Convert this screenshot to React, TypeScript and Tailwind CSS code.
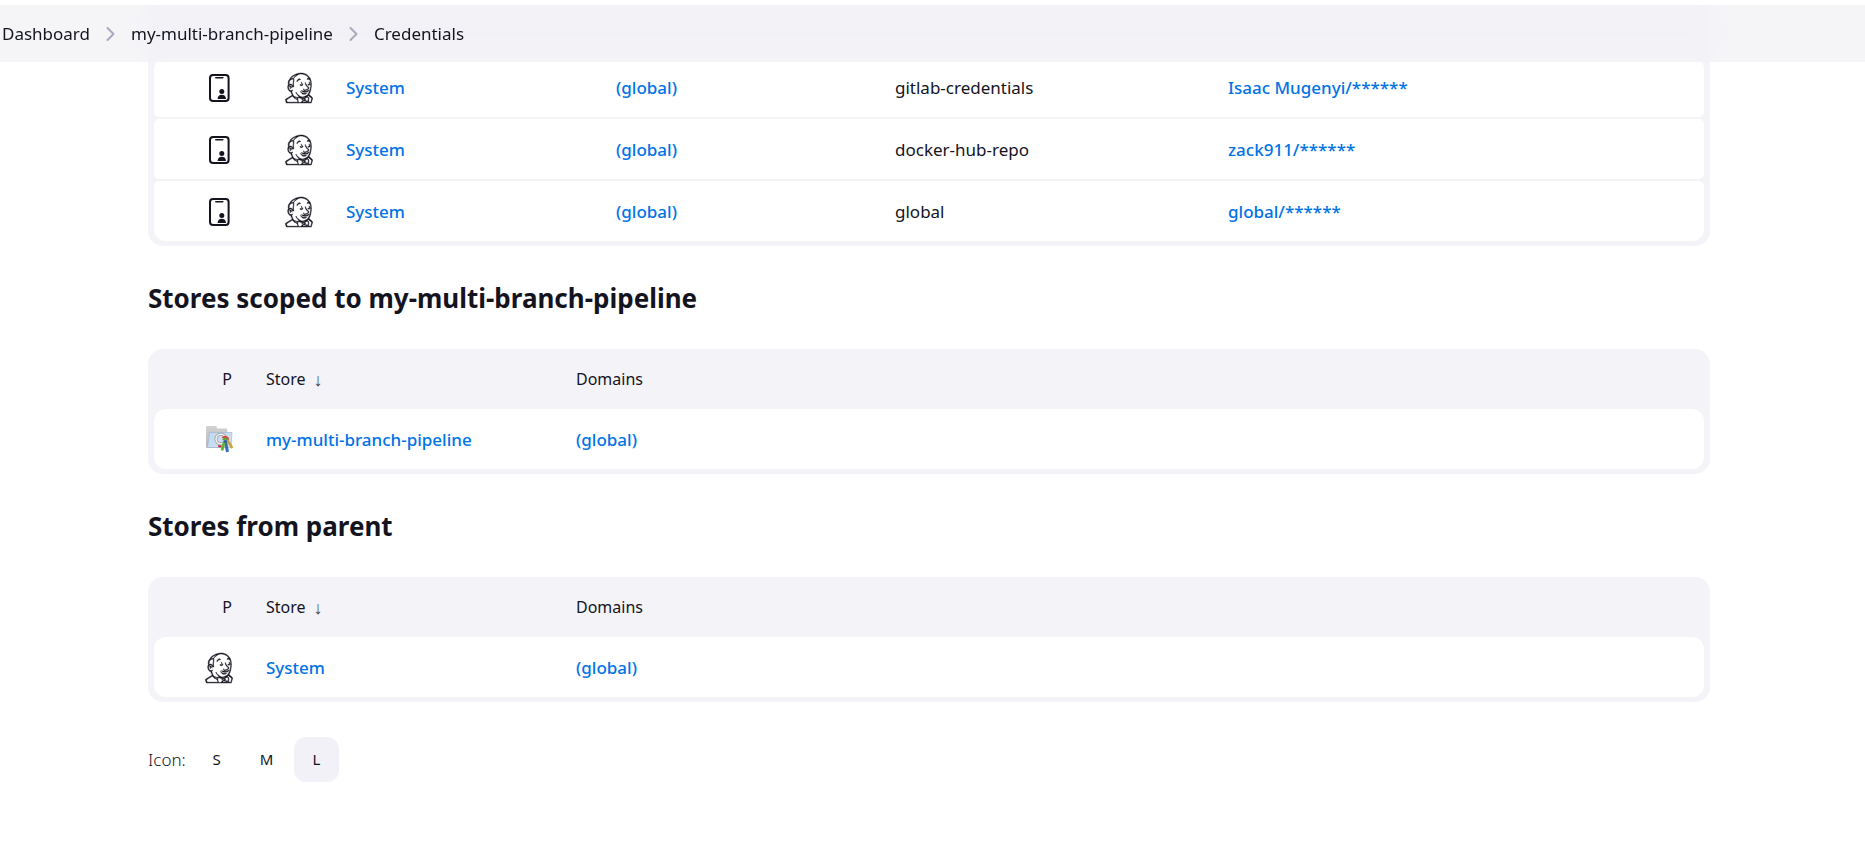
import type { ReactNode } from "react";
import { SiJenkins } from "react-icons/si";

function CredentialIcon() {
  return (
    <svg viewBox="0 0 30 30" className="ml-auto block size-[30px]" fill="none" aria-hidden="true">
      <rect x="6" y="2" width="18.6" height="26" rx="3" stroke="#14141f" strokeWidth="2" />
      <path d="M11.8 4.8h7" stroke="#14141f" strokeWidth="1.6" strokeLinecap="round" />
      <circle cx="17.8" cy="18.4" r="2.5" fill="#14141f" />
      <path d="M13.6 26c0-2.700 1.800-4.200 4.200-4.200s4.200 1.500 4.200 4.200z" fill="#14141f" />
    </svg>
  );
}

function JenkinsIcon() {
  return (
    <SiJenkins
      size={30}
      stroke="#14141f"
      strokeWidth={0.35}
      className="ml-auto block overflow-visible text-[#14141f]"
      aria-hidden="true"
    />
  );
}

function FolderKeysIcon() {
  return (
    <svg viewBox="0 0 30 30" className="ml-auto block size-[30px]" fill="none" aria-hidden="true">
      <defs>
        <linearGradient id="folder-back" x1="0" y1="0" x2="0" y2="1">
          <stop offset="0" stopColor="#d2d2d2" />
          <stop offset="1" stopColor="#b4b7ba" />
        </linearGradient>
        <linearGradient id="folder-front" x1="0" y1="0" x2="1" y2="1">
          <stop offset="0" stopColor="#c3d8ee" />
          <stop offset="1" stopColor="#d0e0f3" />
        </linearGradient>
      </defs>
      <path d="M2 2.200Q2 1 3.200 1h8.600q1 0 1 1v1.500H22q1.200 0 1.200 1.200V23H3.200Q2 23 2 22z" fill="url(#folder-back)" />
      <path d="M5.500 7.500h22.500L27 22.500H3.500z" fill="url(#folder-front)" stroke="#9fb9d6" strokeWidth=".7" />
      <path d="M14.200 20.200h3l.5 2h-3.500z" fill="#d3202a" />
      <circle cx="16.800" cy="14" r="4.800" stroke="#969ca2" strokeWidth="3" />
      <circle cx="16.800" cy="14" r="4.800" stroke="#f3f4f5" strokeWidth="1.500" />
      <path d="M18.500 13.200c2-2.400 5.400-1.400 5.800 1.600" stroke="#d9442b" strokeWidth="2" />
      <path d="M19 15.200c1-2 4-2 5 .5" stroke="#55a53b" strokeWidth="1.800" />
      <path d="M23.200 15l5.200 8" stroke="#c9a336" strokeWidth="2.400" />
      <path d="M21.300 15.500l2.200 11.500" stroke="#3a6fb5" strokeWidth="3" />
      <path d="M20.200 17l-2.200 8.500" stroke="#5fb52b" strokeWidth="2.800" />
      <circle cx="21.200" cy="16.600" r="1.500" fill="#2f5f9e" />
    </svg>
  );
}

function Chevron() {
  return (
    <svg viewBox="0 0 9 16" className="h-4 w-[9px] shrink-0" fill="none" aria-hidden="true">
      <path d="M1.500 2l6 6-6 6" stroke="#a9a9bc" strokeWidth="2" strokeLinecap="round" strokeLinejoin="round" />
    </svg>
  );
}

function Link({ children }: { children: ReactNode }) {
  return (
    <a href="#" className="font-medium text-[#0073e6] hover:underline">
      {children}
    </a>
  );
}

const credentials = [
  { id: "gitlab-credentials", name: "Isaac Mugenyi/******" },
  { id: "docker-hub-repo", name: "zack911/******" },
  { id: "global", name: "global/******" },
];

const panel = "rounded-[15px] bg-[#f3f3f8] px-[6px] pb-[3px]";
const table = "w-full table-fixed border-separate border-spacing-x-0 border-spacing-y-[2px] text-left text-[17px] leading-6";
const cell =
  "h-[60px] bg-white p-0 pt-[2px] first:rounded-l-[5px] last:rounded-r-[5px] group-first:first:rounded-tl-[12px] group-first:last:rounded-tr-[12px] group-last:first:rounded-bl-[12px] group-last:last:rounded-br-[12px]";

function StoreTable({ icon, store }: { icon: ReactNode; store: string }) {
  return (
    <div className={panel}>
      <table className={table}>
        <colgroup>
          <col className="w-[96px]" />
          <col className="w-[20%]" />
          <col />
        </colgroup>
        <thead className="text-base">
          <tr>
            <th className="h-14 p-0 pr-[18px] text-right font-normal">P</th>
            <th className="h-14 p-0 pl-4 font-normal">
              <button type="button" className="flex items-center gap-2">
                Store <span className="text-lg leading-6 text-[#4a4a55]">↓</span>
              </button>
            </th>
            <th className="h-14 p-0 pl-4 font-normal">Domains</th>
          </tr>
        </thead>
        <tbody>
          <tr className="group">
            <td className={`${cell} pr-4`}>{icon}</td>
            <td className={`${cell} pl-4`}>
              <Link>{store}</Link>
            </td>
            <td className={`${cell} pl-4`}>
              <Link>(global)</Link>
            </td>
          </tr>
        </tbody>
      </table>
    </div>
  );
}

export default function App() {
  return (
    <div className="min-h-screen bg-white font-['Noto_Sans','Open_Sans',sans-serif] text-[#14141f]">
      <header className="sticky top-0 z-10 border-t-[5px] border-white bg-[#f2f2f5]/75 bg-clip-padding backdrop-blur-[15px]">
        <nav aria-label="Breadcrumb" className="flex h-[57px] items-center gap-4 pl-[2px] text-[17px] leading-6">
          <a href="#">Dashboard</a>
          <Chevron />
          <a href="#">my-multi-branch-pipeline</a>
          <Chevron />
          <a href="#">Credentials</a>
        </nav>
      </header>

      <main className="-mt-[65px] pr-[155px] pl-[148px]">
        <div className={panel}>
          <table className={table}>
            <colgroup>
              <col className="w-[96px]" />
              <col className="w-[80px]" />
              <col className="w-[270px]" />
              <col className="w-[18%]" />
              <col className="w-[333px]" />
              <col />
            </colgroup>
            <thead>
              <tr>
                <td colSpan={6} className="h-14 p-0" />
              </tr>
            </thead>
            <tbody>
              {credentials.map((c) => (
                <tr key={c.id} className="group">
                  <td className={`${cell} pr-4`}>
                    <CredentialIcon />
                  </td>
                  <td className={`${cell} pr-4`}>
                    <JenkinsIcon />
                  </td>
                  <td className={`${cell} pl-4`}>
                    <Link>System</Link>
                  </td>
                  <td className={`${cell} pl-4`}>
                    <Link>(global)</Link>
                  </td>
                  <td className={`${cell} pl-4`}>{c.id}</td>
                  <td className={`${cell} pl-4`}>
                    <Link>{c.name}</Link>
                  </td>
                </tr>
              ))}
            </tbody>
          </table>
        </div>

        <h2 className="pt-[34px] pb-[33px] text-[26px] leading-9 font-bold">Stores scoped to my-multi-branch-pipeline</h2>
        <StoreTable icon={<FolderKeysIcon />} store="my-multi-branch-pipeline" />

        <h2 className="pt-[34px] pb-[33px] text-[26px] leading-9 font-bold">Stores from parent</h2>
        <StoreTable icon={<JenkinsIcon />} store="System" />

        <div className="flex items-center gap-[5px] pt-[35px]">
          <span className="w-[41px] text-[17px] leading-6 font-light">Icon:</span>
          <button type="button" className="size-[45px] rounded-[12px] text-[15px]">
            S
          </button>
          <button type="button" className="size-[45px] rounded-[12px] text-[15px]">
            M
          </button>
          <button type="button" aria-pressed="true" className="size-[45px] rounded-[12px] bg-[#f2f1f7] text-[15px]">
            L
          </button>
        </div>
      </main>
    </div>
  );
}
